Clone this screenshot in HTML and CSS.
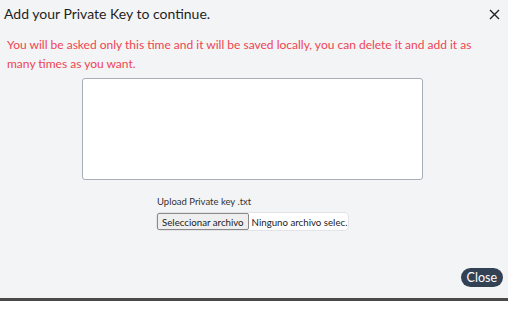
FILE: index.html
```html
<!DOCTYPE html>
<html>
<head>
<meta charset="utf-8">
<link rel="stylesheet" href="styles.css">
</head>
<body>
<div class="dialog">
  <div class="header">
    <h1 class="title">Add your Private Key to continue.</h1>
    <span class="close-x">
      <svg width="11" height="11" viewBox="0 0 11 11"><path d="M1 1L10 10M10 1L1 10" stroke="#222" stroke-width="1.4" fill="none"/></svg>
    </span>
  </div>
  <p class="warning">You will be asked only this time and it will be saved locally, you can delete it and add it as many times as you want.</p>
  <div class="key-area"><textarea class="key-input"></textarea></div>
  <div class="upload">
    <label class="upload-label">Upload Private key .txt</label>
    <div class="file-input">
      <span class="file-btn">Seleccionar archivo</span>
      <span class="file-name">Ninguno archivo selec.</span>
    </div>
  </div>
  <div class="footer">
    <button class="close-btn">Close</button>
  </div>
</div>
</body>
</html>
```

FILE: styles.css
```css
html, body {
  margin: 0;
  padding: 0;
  background: #ffffff;
}
.dialog {
  width: 508px;
  height: 301px;
  box-sizing: border-box;
  background: #f3f4f6;
  border-bottom: 3px solid #4a4a4a;
  box-shadow: 0 1px 0 #a8a8a8;
  font-family: Lato, "Noto Sans", sans-serif;
  display: flex;
  flex-direction: column;
}
.header {
  display: flex;
  justify-content: space-between;
  align-items: center;
  padding: 1px 8px 0 4px;
  height: 24px;
}
.title {
  margin: 0;
  font-size: 14px;
  font-weight: 400;
  color: #1f1f1f;
}
.close-x {
  display: flex;
  margin-top: 2px;
}
.warning {
  margin: 10px 0 0 7px;
  width: 490px;
  font-size: 12px;
  line-height: 19px;
  color: #ef4452;
}
.key-area {
  padding-left: 82px;
  margin-top: 5px;
  display: flex;
}
.key-input {
  width: 341px;
  height: 102px;
  box-sizing: border-box;
  border: 1px solid #a9adb8;
  border-radius: 3px;
  background: #ffffff;
  resize: none;
  margin: 0;
}
.upload {
  padding-left: 157px;
  margin-top: 16px;
  display: flex;
  flex-direction: column;
  align-items: flex-start;
  gap: 6px;
}
.upload-label {
  font-size: 9.5px;
  color: #333;
}
.file-input {
  display: flex;
  align-items: center;
  height: 17px;
  background: #ffffff;
  border-radius: 4px;
  box-shadow: 0 0 0 1px #e2e3e6;
  font-size: 9.7px;
  color: #222;
}
.file-btn {
  flex-shrink: 0;
  white-space: nowrap;
  height: 17px;
  box-sizing: border-box;
  padding: 0 4px;
  display: flex;
  align-items: center;
  background: #efefef;
  border: 1px solid #8a8a8a;
  border-radius: 2px;
}
.file-name {
  padding: 0 1px 0 3px;
  white-space: nowrap;
}
.footer {
  margin-top: auto;
  display: flex;
  justify-content: flex-end;
  padding: 0 5px 11px 0;
}
.close-btn {
  font-family: Lato, "Noto Sans", sans-serif;
  font-size: 12.5px;
  color: #ffffff;
  background: #334155;
  border: none;
  border-radius: 10px;
  height: 19px;
  padding: 0 6px;
  line-height: 19px;
}
```
